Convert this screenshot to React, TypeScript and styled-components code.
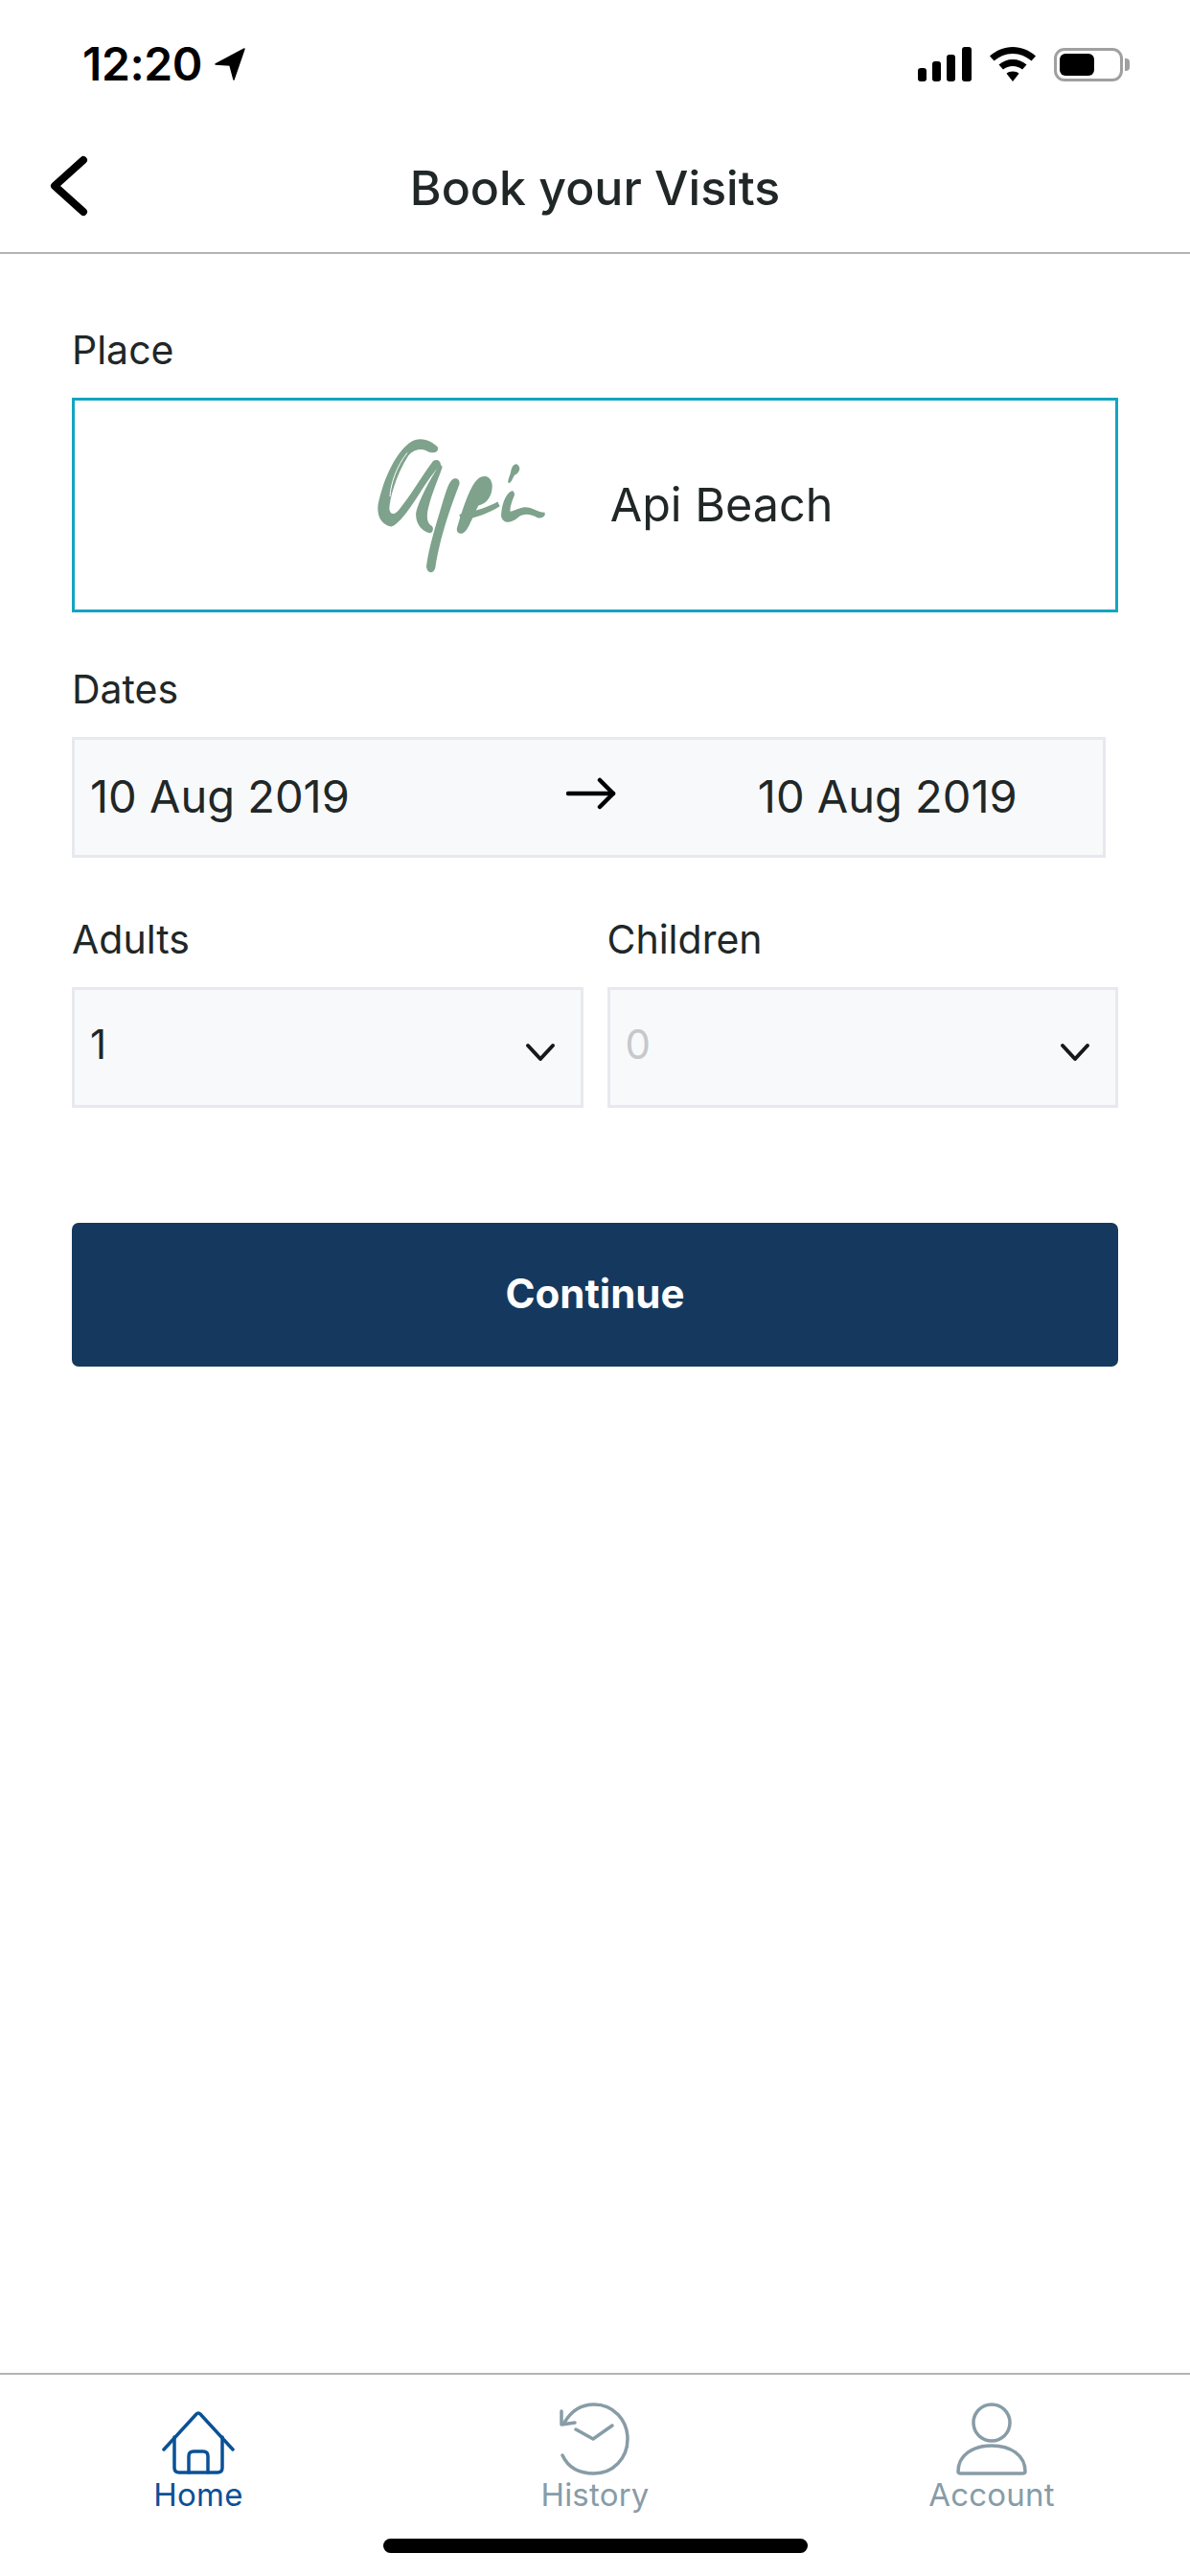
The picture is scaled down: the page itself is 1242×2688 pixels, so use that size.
import styled, { createGlobalStyle } from 'styled-components';

const GlobalStyle = createGlobalStyle`
  html, body {
    margin: 0;
    padding: 0;
    background: #fff;
  }
  * {
    box-sizing: border-box;
  }
`;

const Screen = styled.div`
  width: 1242px;
  height: 2688px;
  display: flex;
  flex-direction: column;
  background: #fff;
  color: #212727;
  font-family: Inter, 'Liberation Sans', sans-serif;
  overflow: hidden;
`;

const StatusBar = styled.div`
  height: 134px;
  padding: 42px 70px 0 86px;
  display: flex;
  justify-content: space-between;
  align-items: flex-start;
`;

const TimeGroup = styled.div`
  display: flex;
  align-items: center;
  gap: 13px;
  height: 50px;
`;

const Time = styled.span`
  font-size: 48px;
  font-weight: 600;
  line-height: 50px;
  color: #000;
  letter-spacing: -0.4px;
`;

const StatusIcons = styled.div`
  display: flex;
  align-items: center;
  gap: 19px;
  height: 50px;
`;

const Battery = styled.div`
  width: 72px;
  height: 35px;
  border: 3px solid #a0a0a0;
  border-radius: 11px;
  padding: 3px;
  position: relative;
  &::after {
    content: '';
    position: absolute;
    right: -10px;
    top: 8px;
    width: 5px;
    height: 13px;
    border-radius: 0 4px 4px 0;
    background: #a0a0a0;
  }
`;

const BatteryFill = styled.div`
  width: 36px;
  height: 100%;
  border-radius: 6px;
  background: #000;
`;

const NavBar = styled.header`
  height: 131px;
  display: grid;
  grid-template-columns: 200px 1fr 200px;
  align-items: center;
  padding-bottom: 5px;
  border-bottom: 2px solid #b4b4b4;
`;

const BackButton = styled.div`
  padding-left: 52px;
  display: flex;
  align-items: center;
  margin-top: -4px;
`;

const NavTitle = styled.h1`
  margin: 0;
  text-align: center;
  font-size: 50px;
  line-height: 58px;
  font-weight: 500;
  color: #212727;
`;

const Content = styled.main`
  flex: 1;
  padding: 75px 75px 0;
  display: flex;
  flex-direction: column;
`;

const Label = styled.div`
  font-size: 41px;
  line-height: 50px;
  color: #212727;
  margin-bottom: 25px;
`;

const PlaceCard = styled.div`
  height: 224px;
  border: 3px solid #12a5c1;
  padding-left: 18px;
  display: flex;
  align-items: center;
  justify-content: center;
  gap: 66px;
  margin-bottom: 55px;
`;

const PlaceName = styled.span`
  font-size: 48.5px;
  line-height: 60px;
  color: #212727;
`;

const FieldBox = styled.div<{ $trim?: boolean }>`
  height: 126px;
  background: #f8f9fb;
  border: 3px solid #e8e9ef;
  display: flex;
  align-items: center;
  justify-content: space-between;
  padding: 0 16px;
  margin-right: ${(p) => (p.$trim ? '13px' : '0')};
`;

const DateBox = styled(FieldBox)`
  justify-content: flex-start;
`;

const DateValue = styled.span`
  font-size: 47px;
  line-height: 60px;
  margin-top: -2px;
  color: #212727;
`;

const DateEnd = styled(DateValue)`
  margin-left: 148px;
`;

const ArrowSlot = styled.div`
  margin-left: 226px;
  margin-top: -9px;
  display: flex;
`;

const SelectRow = styled.div`
  margin-top: 60px;
  display: grid;
  grid-template-columns: 1fr 1fr;
  gap: 25px;
`;

const SelectValue = styled.span<{ $muted?: boolean }>`
  font-size: 42px;
  line-height: 50px;
  margin-top: -6px;
  color: ${(p) => (p.$muted ? '#c6c8cb' : '#212727')};
`;

const ChevronSlot = styled.div`
  display: flex;
  margin: 9px 10px 0 0;
`;

const ContinueButton = styled.button`
  margin-top: 120px;
  height: 150px;
  width: 100%;
  border: none;
  border-radius: 7px;
  background: #15395e;
  color: #fff;
  font-family: inherit;
  font-size: 42px;
  font-weight: 700;
  padding: 0 0 3px;
`;

const TabBar = styled.nav`
  height: 212px;
  border-top: 2px solid #b4b4b4;
  display: flex;
  flex-direction: column;
  align-items: center;
`;

const Tabs = styled.div`
  width: 100%;
  display: grid;
  grid-template-columns: repeat(3, 414px);
  height: 171px;
  padding-top: 21px;
`;

const Tab = styled.div<{ $active?: boolean }>`
  display: flex;
  flex-direction: column;
  align-items: center;
  color: ${(p) => (p.$active ? '#0a5196' : '#879ca7')};
`;

const TabIcon = styled.div`
  height: 84px;
  display: flex;
  align-items: flex-end;
  justify-content: center;
`;

const TabLabel = styled.span`
  font-size: 33px;
  line-height: 40px;
  letter-spacing: 0.2px;
`;

const HomeIndicator = styled.div`
  width: 443px;
  height: 15px;
  border-radius: 8px;
  background: #000;
`;

function LocationArrow() {
  return (
    <svg width="32" height="34" viewBox="0 0 32 34">
      <path d="M1 17 L31 1 L20 33 L16 18 Z" fill="#000" stroke="#000" strokeWidth="1.5" strokeLinejoin="round" />
    </svg>
  );
}

function SignalIcon() {
  return (
    <svg width="56" height="36" viewBox="0 0 56 36" fill="#000">
      <rect x="0" y="22" width="9" height="14" rx="3" />
      <rect x="15" y="15" width="9" height="21" rx="3" />
      <rect x="30" y="8" width="9" height="28" rx="3" />
      <rect x="46" y="0" width="10" height="36" rx="3" />
    </svg>
  );
}

function WifiIcon() {
  return (
    <svg width="48" height="36" viewBox="0 0 48 36" fill="#000">
      <path d="M24 0 C33 0 41 3.500 48 9.500 L43.500 14.500 C38 10 31.500 7 24 7 C16.500 7 10 10 4.500 14.500 L0 9.500 C7 3.500 15 0 24 0 Z" />
      <path d="M24 13 C29.500 13 34.500 15 38.500 18.500 L34 23.500 C31.200 21.200 27.800 20 24 20 C20.200 20 16.800 21.200 14 23.500 L9.500 18.500 C13.500 15 18.500 13 24 13 Z" />
      <path d="M24 25.500 C26.800 25.500 29 26.400 30.500 27.800 L24 36 L17.500 27.800 C19 26.400 21.200 25.500 24 25.500 Z" />
    </svg>
  );
}

function BackChevron() {
  return (
    <svg width="40" height="64" viewBox="0 0 40 64" fill="none">
      <path d="M35 5 L5 32 L35 59" stroke="#000" strokeWidth="8" strokeLinecap="round" strokeLinejoin="round" />
    </svg>
  );
}

function ApiLogo() {
  return (
    <svg width="180" height="147" viewBox="120 70 540 440" fill="#7ea28c">
      <path d="M318 108 C298 86 262 72 232 92 C190 120 150 200 132 280 C124 320 140 350 172 356 C195 350 230 300 262 250 C280 222 300 190 326 165 C330 150 310 140 300 155 C270 195 235 255 195 305 C180 322 168 318 166 300 C168 260 190 190 225 135 C240 115 262 110 282 118 C295 128 322 128 318 108 Z" />
      <path d="M326 160 C300 195 262 265 250 310 C245 345 270 375 296 376 C305 370 305 355 296 352 C285 345 280 325 290 290 C300 250 320 205 332 170 Z" />
      <path d="M372 205 C355 205 345 240 330 290 C312 350 290 420 282 480 C284 505 305 505 310 485 C320 420 340 340 385 225 C388 210 380 205 372 205 Z" />
      <path d="M390 378 C410 378 420 340 445 290 C470 285 490 260 488 225 C485 200 465 192 445 205 C420 225 395 300 378 360 C375 372 382 378 390 378 Z" />
      <path d="M385 318 C430 310 475 295 505 278 L512 292 C480 312 440 328 390 336 Z" />
      <path d="M548 245 C528 255 518 290 516 322 C522 350 548 345 568 328 C588 312 610 318 630 328 C645 332 658 322 652 312 C630 312 610 292 585 296 C565 300 552 310 544 308 C544 290 552 272 558 257 C558 245 552 243 548 245 Z" />
      <path d="M565 160 C550 160 548 178 545 190 C540 205 535 215 540 220 C548 220 552 205 558 195 C572 190 582 170 565 160 Z" />
      <path d="M222 125 C190 165 170 220 168 262" fill="none" stroke="#fff" strokeWidth="3" />
    </svg>
  );
}

function LongArrow() {
  return (
    <svg width="52" height="34" viewBox="0 0 52 34" fill="none" stroke="#000" strokeWidth="4.500" strokeLinecap="round" strokeLinejoin="round">
      <path d="M2 17 H49" />
      <path d="M35 3 L49 17 L35 31" />
    </svg>
  );
}

function SelectChevron() {
  return (
    <svg width="32" height="20" viewBox="0 0 32 20" fill="none">
      <path d="M3 3 L16 17 L29 3" stroke="#15191c" strokeWidth="4" strokeLinecap="round" strokeLinejoin="round" />
    </svg>
  );
}

function HomeIcon() {
  return (
    <svg width="76" height="68" viewBox="0 0 76 68" fill="none" stroke="currentColor" strokeWidth="3.500" strokeLinecap="round" strokeLinejoin="round">
      <path d="M2 41 L36 4 Q38 2 40 4 L74 41" />
      <path d="M13 28 V60 Q13 65 18 65 H58 Q63 65 63 60 V28" />
      <path d="M28 65 V48 Q28 43 33 43 H43 Q48 43 48 48 V65" />
    </svg>
  );
}

function HistoryIcon() {
  return (
    <svg width="76" height="76" viewBox="0 0 76 76" fill="none" stroke="currentColor" strokeWidth="3.500" strokeLinecap="round" strokeLinejoin="round">
      <path d="M4 55 C10 68 22 74 37 74 C57 74 72 58 72 38 C72 18 57 2 37 2 C24 2 13 9 6 21" />
      <path d="M3 9 L3 23 L17 21" />
      <path d="M18 28 L36 38 L56 24" />
    </svg>
  );
}

function AccountIcon() {
  return (
    <svg width="74" height="76" viewBox="0 0 74 76" fill="none" stroke="currentColor" strokeWidth="3.500" strokeLinejoin="round">
      <circle cx="37" cy="21" r="19" />
      <path d="M2 72 C2 55 17 45 37 45 C57 45 72 55 72 72 Q72 74 69 74 H5 Q2 74 2 72 Z" />
    </svg>
  );
}

export default function App() {
  return (
    <>
      <GlobalStyle />
      <Screen>
        <StatusBar>
          <TimeGroup>
            <Time>12:20</Time>
            <LocationArrow />
          </TimeGroup>
          <StatusIcons>
            <SignalIcon />
            <WifiIcon />
            <Battery>
              <BatteryFill />
            </Battery>
          </StatusIcons>
        </StatusBar>
        <NavBar>
          <BackButton>
            <BackChevron />
          </BackButton>
          <NavTitle>Book your Visits</NavTitle>
        </NavBar>
        <Content>
          <Label>Place</Label>
          <PlaceCard>
            <ApiLogo />
            <PlaceName>Api Beach</PlaceName>
          </PlaceCard>
          <Label>Dates</Label>
          <DateBox $trim>
            <DateValue>10 Aug 2019</DateValue>
            <ArrowSlot>
              <LongArrow />
            </ArrowSlot>
            <DateEnd>10 Aug 2019</DateEnd>
          </DateBox>
          <SelectRow>
            <div>
              <Label>Adults</Label>
              <FieldBox>
                <SelectValue>1</SelectValue>
                <ChevronSlot>
                  <SelectChevron />
                </ChevronSlot>
              </FieldBox>
            </div>
            <div>
              <Label>Children</Label>
              <FieldBox>
                <SelectValue $muted>0</SelectValue>
                <ChevronSlot>
                  <SelectChevron />
                </ChevronSlot>
              </FieldBox>
            </div>
          </SelectRow>
          <ContinueButton>Continue</ContinueButton>
        </Content>
        <TabBar>
          <Tabs>
            <Tab $active>
              <TabIcon>
                <HomeIcon />
              </TabIcon>
              <TabLabel>Home</TabLabel>
            </Tab>
            <Tab>
              <TabIcon>
                <HistoryIcon />
              </TabIcon>
              <TabLabel>History</TabLabel>
            </Tab>
            <Tab>
              <TabIcon>
                <AccountIcon />
              </TabIcon>
              <TabLabel>Account</TabLabel>
            </Tab>
          </Tabs>
          <HomeIndicator />
        </TabBar>
      </Screen>
    </>
  );
}
